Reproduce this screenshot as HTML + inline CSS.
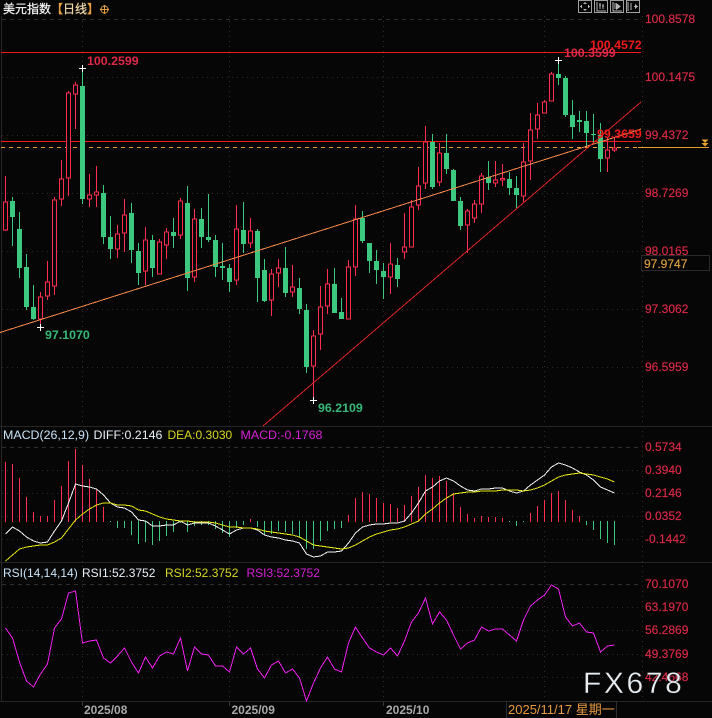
<!DOCTYPE html>
<html><head><meta charset="utf-8"><title>美元指数</title>
<style>
html,body{margin:0;padding:0;background:#060606;width:712px;height:718px;overflow:hidden}
svg{display:block}
text{font-family:"Liberation Sans","Noto Sans CJK SC",sans-serif;font-size:12px}
.ax{fill:#dc2a48;stroke:#dc2a48;stroke-width:.15}
.b{font-weight:bold;font-size:12.4px}
.m{font-size:12.4px}
</style></head><body>
<svg width="712" height="718" viewBox="0 0 712 718" xmlns="http://www.w3.org/2000/svg">
<rect width="712" height="718" fill="#060606"/>
<g shape-rendering="crispEdges" fill="none">
<!-- grid -->
<path stroke="#2e2e2e" stroke-dasharray="4 4" d="M2 19.5H641M2 447.5H641M2 584.5H641"/>
<path stroke="#2e2e2e" stroke-dasharray="1 4" d="M2 77.5H641M2 135.5H641M2 193.5H641M2 251.5H641M2 309.5H641M2 367.5H641M2 470.5H641M2 493.5H641M2 516.5H641M2 539.5H641M2 607.5H641M2 630.5H641M2 654.5H641M2 677.5H641"/>
<path stroke="#2e2e2e" stroke-dasharray="1 4" d="M82.5 16V700M229.5 16V700M383.5 16V700M544.5 16V700M642.5 16V700"/>
<!-- separators -->
<path stroke="#262626" stroke-width="1" d="M0 426.5H712M0 562.5H712M0 701.5H712M1.5 16V701"/>
<path stroke="#3a3a3a" d="M82.5 702V706M229.5 702V706M383.5 702V706"/>
<!-- h lines -->
<path stroke="#f01a1a" d="M1 52.5H641M1 141.5H641"/>
<path stroke="#e8a030" stroke-dasharray="4 4" d="M1 147.5H638"/>
<path stroke="#e8a030" d="M638 147.5H709"/>
<!-- red wicks -->
<path stroke="#ff2d50" d="M5.5 176V231M40.5 292V327M47.5 261V300M54.5 197V295M61.5 160V206M68.5 91V196M75.5 82V129M89.5 174V207M96.5 166V207M117.5 225V258M124.5 199V252M145.5 227V285M159.5 239V274M166.5 228V259M180.5 198V239M194.5 209V282M236.5 205V285M250.5 218V248M271.5 269V316M278.5 259V287M292.5 265V297M313.5 330V400M320.5 286V350M327.5 269V314M348.5 260V319M355.5 205V276M390.5 243V294M404.5 213V259M411.5 200V247M418.5 167V210M425.5 126V189M439.5 143V186M467.5 209V253M474.5 200V223M481.5 173V213M495.5 161V187M502.5 164V186M523.5 143V202M530.5 113V180M537.5 103V139M544.5 100V113M551.5 72V101M607.5 138V172M614.5 137V152"/>
<!-- red bodies -->
<path stroke="#ff2d50" fill="#060606" d="M3.5 202h4v28h-4zM38.5 297h4v22h-4zM45.5 282h4v14h-4zM52.5 200h4v86h-4zM59.5 179h4v20h-4zM66.5 93h4v85h-4zM73.5 85h4v9h-4zM87.5 195h4v4h-4zM94.5 192h4v3h-4zM115.5 234h4v15h-4zM122.5 215h4v18h-4zM143.5 240h4v31h-4zM157.5 242h4v32h-4zM164.5 232h4v13h-4zM178.5 201h4v34h-4zM192.5 219h4v58h-4zM234.5 229h4v51h-4zM248.5 231h4v12h-4zM269.5 274h4v26h-4zM276.5 268h4v5h-4zM290.5 287h4v5h-4zM311.5 336h4v30h-4zM318.5 307h4v27h-4zM325.5 284h4v22h-4zM346.5 267h4v52h-4zM353.5 219h4v48h-4zM388.5 264h4v13h-4zM402.5 247h4v5h-4zM409.5 207h4v40h-4zM416.5 186h4v19h-4zM423.5 142h4v41h-4zM437.5 153h4v29h-4zM465.5 211h4v14h-4zM472.5 204h4v14h-4zM479.5 176h4v28h-4zM493.5 180h4v3h-4zM500.5 178.5h4v1.5h-4zM521.5 162h4v34h-4zM528.5 130h4v31h-4zM535.5 115h4v14h-4zM542.5 102h4v11h-4zM549.5 74h4v27h-4zM605.5 150h4v8h-4zM612.5 148h4v2h-4z"/>
<!-- green wicks -->
<path stroke="#3cc87e" d="M12.5 197V246M19.5 212V278M26.5 254V310M33.5 285V320M82.5 68V204M103.5 185V244M110.5 216V259M131.5 203V263M138.5 243V285M152.5 235V277M173.5 218V248M187.5 186V291M201.5 208V248M208.5 194V242M215.5 235V277M222.5 243V280M229.5 264V292M243.5 202V253M257.5 229V302M264.5 259V302M285.5 247V297M299.5 278V314M306.5 304V373M334.5 268V313M341.5 298V319M362.5 211V243M369.5 243V273M376.5 250V284M383.5 263V299M397.5 258V287M432.5 134V189M446.5 134V174M453.5 169V201M460.5 197V230M488.5 161V190M509.5 172V195M516.5 176V208M558.5 60V85M565.5 76V117M572.5 100V139M579.5 111V132M586.5 111V147M593.5 114V143M600.5 123V172"/>
<!-- green bodies -->
<path fill="#3cc87e" d="M10 201h5v16h-5zM17 229h5v39h-5zM24 267h5v40h-5zM31 307h5v12h-5zM80 86h5v113h-5zM101 193h5v44h-5zM108 237h5v12h-5zM129 213h5v37h-5zM136 251h5v22h-5zM150 240h5v28h-5zM171 232h5v4h-5zM185 203h5v75h-5zM199 219h5v18h-5zM206 237h5v3h-5zM213 240h5v27h-5zM220 266h5v2h-5zM227 268h5v14h-5zM241 230h5v14h-5zM255 231h5v47h-5zM262 270h5v31h-5zM283 268h5v25h-5zM297 288h5v21h-5zM304 310h5v57h-5zM332 284h5v29h-5zM339 312h5v7h-5zM360 218h5v23h-5zM367 243h5v18h-5zM374 261h5v9h-5zM381 271h5v6h-5zM395 265h5v14h-5zM430 142h5v45h-5zM444 153h5v16h-5zM451 170h5v31h-5zM458 201h5v25h-5zM486 177h5v6h-5zM507 179h5v9h-5zM514 188h5v7h-5zM556 74h5v4h-5zM563 78h5v37h-5zM570 115h5v12h-5zM577 120h5v2h-5zM584 121h5v12h-5zM591 134h5v1h-5zM598 135h5v24h-5z"/>
<!-- trend lines -->
<path stroke="#f5894a" d="M0 332.5L641 129"/>
<path stroke="#e62222" d="M263 426L641 102"/>
<!-- crosses -->
<path stroke="#fff" d="M79 68.5h7M82.5 65v7M37 327.5h7M40.5 324v7M310 400.5h7M313.5 397v7M555 60.5h7M558.5 57v7"/>
<!-- macd hist -->
<path stroke="#ff2d50" d="M5.5 462V522M12.5 464V522M19.5 478V522M26.5 497V522M33.5 512V522M40.5 516V522M47.5 516V522M54.5 500V522M61.5 486V522M68.5 461V522M75.5 449V522M82.5 465V522M89.5 479V522M96.5 490V522M103.5 507V522M250.5 519V522M348.5 515V522M355.5 498V522M362.5 492V522M369.5 494V522M376.5 498V522M383.5 503V522M390.5 504V522M397.5 508V522M404.5 505V522M411.5 496V522M418.5 487V522M425.5 475V522M432.5 478V522M439.5 476V522M446.5 481V522M453.5 493V522M460.5 507V522M467.5 514V522M474.5 518V522M481.5 516V522M488.5 517V522M495.5 517V522M502.5 518V522M530.5 513V522M537.5 506V522M544.5 500V522M551.5 493V522M558.5 491V522M565.5 500V522M572.5 510V522M579.5 516V522"/>
<path stroke="#3cc87e" d="M110.5 521V522M117.5 521V528M124.5 521V528M131.5 521V535M138.5 521V544M145.5 521V542M152.5 521V545M159.5 521V541M166.5 521V536M173.5 521V532M180.5 521V523M187.5 521V532M194.5 521V526M201.5 521V525M208.5 521V525M215.5 521V529M222.5 521V533M229.5 521V537M236.5 521V528M243.5 521V525M257.5 521V527M264.5 521V535M271.5 521V534M278.5 521V531M285.5 521V532M292.5 521V534M299.5 521V538M306.5 521V549M313.5 521V549M320.5 521V541M327.5 521V531M334.5 521V529M341.5 521V528M509.5 521V522M516.5 521V526M523.5 521V522M586.5 521V525M593.5 521V530M600.5 521V539M607.5 521V543M614.5 521V545"/>
<!-- DIFF -->
<polyline stroke="#f4f4f4" points="5.5,534 12.5,527 19.5,531 26.5,537 33.5,541 40.5,543 47.5,542 54.5,531 61.5,521 68.5,503 75.5,484 82.5,486 89.5,487 96.5,489 103.5,495 110.5,503 117.5,507 124.5,508 131.5,512 138.5,520 145.5,521 152.5,526 159.5,526 166.5,525 173.5,525 180.5,521 187.5,525 194.5,523 201.5,523 208.5,523 215.5,526 222.5,530 229.5,534 236.5,530 243.5,528 250.5,528 257.5,530 264.5,535 271.5,537 278.5,538 285.5,540 292.5,541 299.5,543 306.5,554 313.5,557 320.5,556 327.5,552 334.5,552 341.5,551 348.5,543 355.5,533 362.5,527 369.5,525 376.5,524 383.5,524 390.5,523 397.5,523 404.5,521 411.5,513 418.5,503 425.5,491 432.5,487 439.5,481 446.5,478 453.5,481 460.5,486 467.5,490 474.5,491 481.5,489 488.5,489 495.5,488 502.5,488 509.5,491 516.5,493 523.5,491 530.5,485 537.5,480 544.5,475 551.5,467 558.5,463 565.5,465 572.5,468 579.5,472 586.5,475 593.5,480 600.5,487 607.5,490 614.5,493"/>
<!-- DEA -->
<polyline stroke="#e6e610" points="5.5,561 12.5,555 19.5,549 26.5,547 33.5,546 40.5,545 47.5,545 54.5,542 61.5,538 68.5,529 75.5,520 82.5,514 89.5,509 96.5,505 103.5,503 110.5,503 117.5,505 124.5,505 131.5,506 138.5,510 145.5,511 152.5,514 159.5,517 166.5,519 173.5,520 180.5,521 187.5,521 194.5,522 201.5,522 208.5,522 215.5,523 222.5,525 229.5,527 236.5,527 243.5,528 250.5,528 257.5,529 264.5,531 271.5,532 278.5,533 285.5,534 292.5,535 299.5,537 306.5,541 313.5,545 320.5,546 327.5,547 334.5,548 341.5,549 348.5,548 355.5,545 362.5,541 369.5,537 376.5,534 383.5,532 390.5,530 397.5,529 404.5,527 411.5,524 418.5,521 425.5,514 432.5,509 439.5,503 446.5,498 453.5,494 460.5,493 467.5,492 474.5,492 481.5,491 488.5,491 495.5,491 502.5,490 509.5,490 516.5,490 523.5,491 530.5,490 537.5,488 544.5,485 551.5,481 558.5,477 565.5,475 572.5,474 579.5,473 586.5,474 593.5,475 600.5,477 607.5,479 614.5,482"/>
<!-- RSI -->
<polyline stroke="#f020f0" points="5.5,628 12.5,638 19.5,662 26.5,681 33.5,687 40.5,674 47.5,664 54.5,628 61.5,619 68.5,593 75.5,591 82.5,643 89.5,641 96.5,640 103.5,658 110.5,663 117.5,656 124.5,648 131.5,662 138.5,673 145.5,657 152.5,668 159.5,656 166.5,652 173.5,654 180.5,638 187.5,671 194.5,647 201.5,654 208.5,655 215.5,666 222.5,666 229.5,672 236.5,647 243.5,654 250.5,648 257.5,669 264.5,678 271.5,665 278.5,661 285.5,673 292.5,669 299.5,678 306.5,701 313.5,683 320.5,668 327.5,657 334.5,669 341.5,672 348.5,643 355.5,627 362.5,638 369.5,648 376.5,652 383.5,655 390.5,648 397.5,656 404.5,641 411.5,622 418.5,613 425.5,598 432.5,624 439.5,612 446.5,620 453.5,635 460.5,649 467.5,643 474.5,640 481.5,627 488.5,631 495.5,629 502.5,629 509.5,635 516.5,641 523.5,620 530.5,606 537.5,600 544.5,595 551.5,585 558.5,589 565.5,617 572.5,626 579.5,623 586.5,632 593.5,633 600.5,652 607.5,646 614.5,645"/>
<!-- right axis box -->
<rect x="641.5" y="255.5" width="68" height="15" fill="#060606" stroke="#2a2a2a"/>
<!-- date box -->
<rect x="506.5" y="701.5" width="110" height="17" fill="#060606" stroke="#2e2e2e"/>
<!-- toolbar -->
<g stroke="#a0a0a0" fill="#060606">
<rect x="578.5" y="0.5" width="13" height="12"/>
<rect x="594.5" y="0.5" width="13" height="12"/>
<rect x="610.5" y="0.5" width="13" height="12"/>
<rect x="626.5" y="0.5" width="13" height="12"/>
</g>
<g stroke="#b4b4b4" fill="none">
<path d="M585 2v2M585 9v2M580 6.5h2M588 6.5h2M583.5 3.5h3M583.5 9.5h3M581.5 5v3M588.5 5v3"/>
<path d="M597 2v9h9M600 3v6M603 4v5M599 5h2M602 6h2"/>
<path d="M613 2v9h9M615 3v6"/>
<path d="M628 2v9M631 3v7M634 6.5h4"/>
</g>
<path fill="#b4b4b4" d="M616 3l5 3.5-5 3.5zM635 4l3 2.5-3 2.5z"/>
<!-- title icon -->
<circle cx="104.5" cy="9.5" r="3.5" stroke="#e09a40"/>
<path stroke="#e09a40" d="M100 9.5h9M104.5 5v9"/>
</g>
<!-- arrows -->
<path fill="#e8a030" d="M701.5 139.5h7l-3.5 3.5zM701.5 143h7l-3.5 3.5z"/>
<!-- title -->
<text x="3" y="13" fill="#f4f4f4" stroke="#f4f4f4" stroke-width=".25">美元指数</text>
<text x="51" y="13" fill="#e8a040" stroke="#e8a040" stroke-width=".25">【</text>
<text x="63" y="13" fill="#f0d8a8" stroke="#f0d8a8" stroke-width=".25">日线</text>
<text x="87" y="13" fill="#e8a040" stroke="#e8a040" stroke-width=".25">】</text>
<!-- axis labels -->
<text class="ax" x="645" y="23">100.8578</text>
<text class="ax" x="645" y="81">100.1475</text>
<text class="ax" x="645" y="139">99.4372</text>
<text class="ax" x="645" y="197">98.7269</text>
<text class="ax" x="645" y="255">98.0165</text>
<text class="ax" x="645" y="313">97.3062</text>
<text class="ax" x="645" y="371">96.5959</text>
<text x="644" y="268" fill="#e0a040" stroke="#e0a040" stroke-width=".15">97.9747</text>
<text class="ax" x="645" y="451">0.5734</text>
<text class="ax" x="645" y="474">0.3940</text>
<text class="ax" x="645" y="497">0.2146</text>
<text class="ax" x="645" y="520">0.0352</text>
<text class="ax" x="645" y="543">-0.1442</text>
<text class="ax" x="645" y="588">70.1070</text>
<text class="ax" x="645" y="611">63.1970</text>
<text class="ax" x="645" y="634">56.2869</text>
<text class="ax" x="645" y="658">49.3769</text>
<text class="ax" x="645" y="681">42.4668</text>
<!-- price notes -->
<text class="b" x="87" y="65" fill="#e02848">100.2599</text>
<text class="b" x="45" y="339" fill="#38b878">97.1070</text>
<text class="b" x="318" y="412" fill="#38b878">96.2109</text>
<text class="b" x="564" y="57" fill="#e02848">100.3599</text>
<text class="b" x="590" y="49" fill="#f01a1a">100.4572</text>
<text class="b" x="597" y="138" fill="#f01a1a">99.3659</text>
<!-- macd header -->
<text class="m" x="3" y="439" fill="#c8e4f8">MACD(26,12,9)</text>
<text class="m" x="93.5" y="439" fill="#e8f0f8">DIFF:0.2146</text>
<text x="167.5" y="439" fill="#d8d820">DEA:0.3030</text>
<text class="m" x="240.5" y="439" fill="#d820d8">MACD:-0.1768</text>
<!-- rsi header -->
<text x="3" y="577" fill="#c8e4f8">RSI(14,14,14)</text>
<text x="82" y="577" fill="#e8f0f8">RSI1:52.3752</text>
<text x="165" y="577" fill="#d8d820">RSI2:52.3752</text>
<text x="246.5" y="577" fill="#d820d8">RSI3:52.3752</text>
<!-- dates -->
<text class="b" style="font-size:12px" x="84" y="714" fill="#a8a8a8">2025/08</text>
<text class="b" style="font-size:12px" x="231.5" y="714" fill="#a8a8a8">2025/09</text>
<text class="b" style="font-size:12px" x="386" y="714" fill="#a8a8a8">2025/10</text>
<text x="508" y="714" fill="#e89a40" style="font-size:13px">2025/11/17 星期一</text>
<!-- watermark -->
<text x="583" y="693" fill="#e8edf2" stroke="#1a1a1a" stroke-width="0.4" style="font-size:30px;letter-spacing:2.6px">FX678</text>
</svg>
</body></html>
